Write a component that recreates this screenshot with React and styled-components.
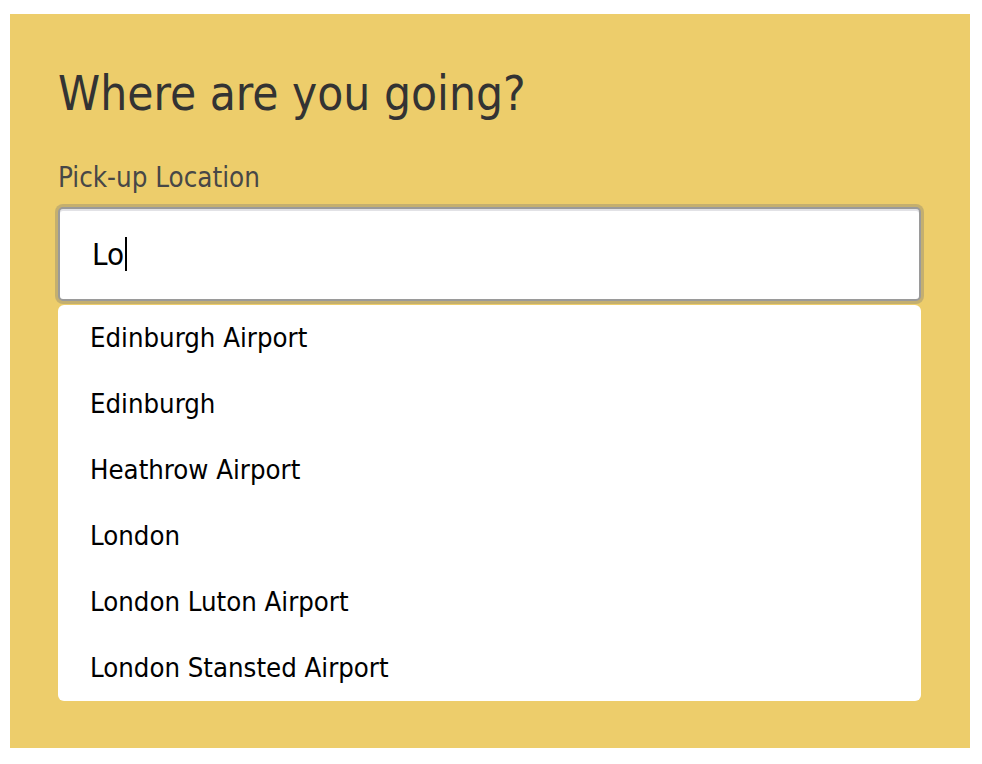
import React from "react";
import styled, { createGlobalStyle } from "styled-components";

const GlobalStyle = createGlobalStyle`
  body {
    margin: 0;
    background: #fff;
    font-family: "DejaVu Sans Condensed", "DejaVu Sans", sans-serif;
  }
`;

const places = [
  "Edinburgh Airport",
  "Edinburgh",
  "Heathrow Airport",
  "London",
  "London Luton Airport",
  "London Stansted Airport",
];

function App() {
  return (
    <Page>
      <GlobalStyle />
      <Panel>
        <Title>Where are you going?</Title>
        <Label>Pick-up Location</Label>
        <Field>
          <Value>Lo</Value>
          <Caret />
        </Field>
        <Menu>
          {places.map((p) => (
            <Option key={p}>{p}</Option>
          ))}
        </Menu>
      </Panel>
    </Page>
  );
}

export default App;

const Page = styled.div`
  padding: 14px 12px 16px 10px;
`;

const Panel = styled.div`
  background: #edcd6b;
  height: 734px;
  box-sizing: border-box;
  padding: 48px 49px 0 48px;
  display: flex;
  flex-direction: column;
`;

const Title = styled.h1`
  margin: 0;
  font-weight: normal;
  font-size: 47.4px;
  line-height: 64px;
  color: #333;
`;

const Label = styled.div`
  margin-top: 33px;
  font-size: 27.5px;
  line-height: 36px;
  color: #474747;
`;

const Field = styled.div`
  margin-top: 12px;
  height: 94px;
  box-sizing: border-box;
  border: 2px solid #9a9a9a;
  border-radius: 5px;
  background: #fff;
  box-shadow: 0 0 0 3px rgba(120, 120, 120, 0.35), inset 0 2px 0 #e2e2e6;
  display: flex;
  align-items: center;
  padding-left: 32px;
  font-size: 31px;
  color: #000;
`;

const Value = styled.span``;

const Caret = styled.span`
  width: 2px;
  height: 34px;
  background: #000;
  margin-left: 1px;
`;

const Menu = styled.ul`
  list-style: none;
  margin: 4px 0 0;
  padding: 0;
  background: #fff;
  border-radius: 6px;
`;

const Option = styled.li`
  padding-left: 32px;
  height: 66px;
  line-height: 66px;
  font-size: 27.3px;
  color: #000;
`;
